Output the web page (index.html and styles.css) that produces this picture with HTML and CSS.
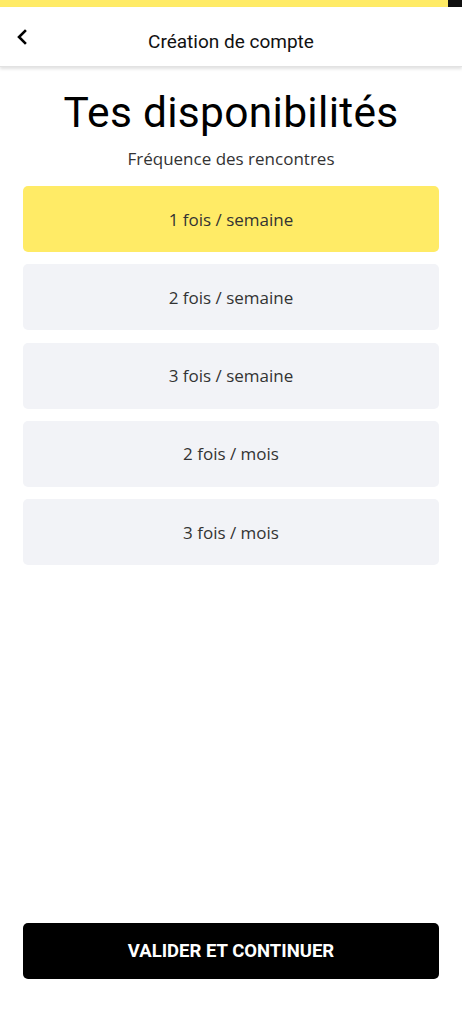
FILE: index.html
```html
<!DOCTYPE html>
<html lang="fr">
<head>
    <meta charset="UTF-8">
    <meta name="viewport" content="width=device-width, initial-scale=1.0">
    <title>Création de compte</title>
    <link rel="stylesheet" href="styles.css">
</head>
<body>
    <div class="progress">
        <div class="progress-fill"></div>
    </div>

    <header class="topbar">
        <button class="back" aria-label="Retour">
            <svg width="12" height="16" viewBox="0 0 12 16">
                <path d="M9 2 L3 8 L9 14" fill="none" stroke="#000" stroke-width="2.6" stroke-linecap="square"/>
            </svg>
        </button>
        <div class="topbar-title">Création de compte</div>
    </header>

    <main class="content">
        <h1>Tes disponibilités</h1>
        <p class="subtitle">Fréquence des rencontres</p>

        <div class="options">
            <div class="option selected">1 fois / semaine</div>
            <div class="option">2 fois / semaine</div>
            <div class="option">3 fois / semaine</div>
            <div class="option">2 fois / mois</div>
            <div class="option">3 fois / mois</div>
        </div>
    </main>

    <footer class="footer">
        <button class="submit">VALIDER ET CONTINUER</button>
    </footer>
</body>
</html>
```

FILE: styles.css
```css
* {
    margin: 0;
    padding: 0;
    box-sizing: border-box;
}

body {
    font-family: Roboto, 'Liberation Sans', sans-serif;
    background: #fff;
    width: 462px;
    height: 1024px;
    display: flex;
    flex-direction: column;
    color: #000;
}

.progress {
    height: 7px;
    background: #111;
    display: flex;
}

.progress-fill {
    width: 448px;
    background: #ffeb66;
}

.topbar {
    height: 60px;
    display: flex;
    align-items: center;
    justify-content: center;
    position: relative;
    box-shadow: 0 2px 3px rgba(0, 0, 0, 0.12);
    border-bottom: 1px solid #e2e2e2;
}

.back {
    position: absolute;
    left: 15px;
    top: 22px;
    background: none;
    border: none;
    width: 14px;
    height: 18px;
}

.topbar-title {
    font-size: 19px;
    font-weight: 400;
    color: #111;
    margin-top: 10px;
}

.content {
    flex: 1;
    padding: 22px 23px 0;
}

h1 {
    text-align: center;
    font-size: 42.5px;
    font-weight: 400;
    line-height: 48px;
    letter-spacing: 0.3px;
}

.subtitle {
    text-align: center;
    font-family: 'Open Sans', sans-serif;
    font-size: 17px;
    line-height: 23px;
    color: #333;
    margin-top: 10px;
}

.options {
    margin-top: 16px;
    display: flex;
    flex-direction: column;
    gap: 12.3px;
}

.option {
    height: 66px;
    border-radius: 5px;
    background: #f2f3f7;
    display: flex;
    align-items: center;
    justify-content: center;
    font-family: 'Open Sans', sans-serif;
    font-size: 17px;
    color: #333;
}

.option.selected {
    background: #ffeb66;
}

.footer {
    padding: 0 23px 45px;
}

.submit {
    width: 100%;
    height: 56px;
    background: #000;
    color: #fff;
    border: none;
    border-radius: 5px;
    font-family: Roboto, sans-serif;
    font-weight: 700;
    font-size: 18.5px;
}
```
